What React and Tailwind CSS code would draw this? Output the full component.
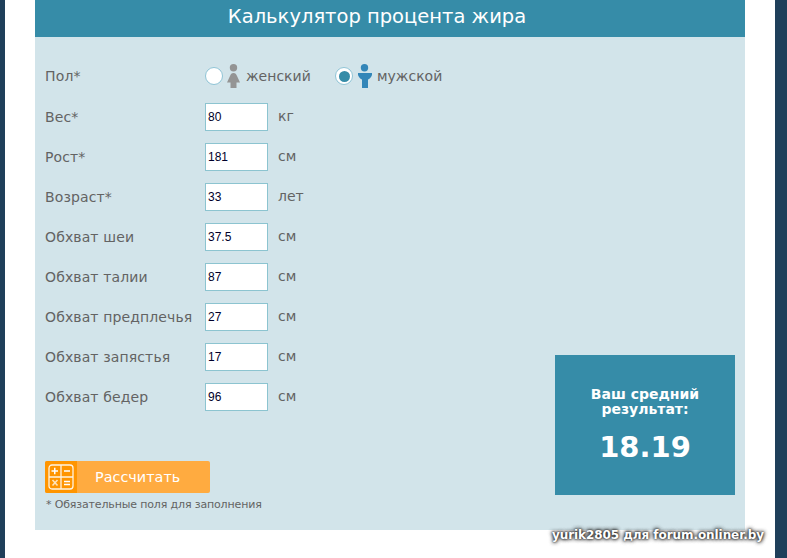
const font = { fontFamily: '"DejaVu Sans", sans-serif' };

const rows = [
  ["Вес*", "80", "кг"],
  ["Рост*", "181", "см"],
  ["Возраст*", "33", "лет"],
  ["Обхват шеи", "37.5", "см"],
  ["Обхват талии", "87", "см"],
  ["Обхват предплечья", "27", "см"],
  ["Обхват запястья", "17", "см"],
  ["Обхват бедер", "96", "см"],
];

function Female() {
  return (
    <svg width="14" height="24" viewBox="0 0 14 24" className="block shrink-0">
      <circle cx="6.5" cy="3.8" r="3.7" fill="#949494" />
      <path d="M6.5 9 C8.5 9 9.2 10 10 12 L13 18.5 L9.5 18.5 L9.5 24 L3.5 24 L3.5 18.5 L0 18.5 L3 12 C3.8 10 4.5 9 6.5 9 Z" fill="#949494" />
    </svg>
  );
}

function Male() {
  return (
    <svg width="14" height="24" viewBox="0 0 14 24" className="block shrink-0">
      <circle cx="6.5" cy="3.8" r="3.7" fill="#3386b8" />
      <path d="M0 9 L14 9 L14 11 C13 13.5 11.5 15 10 15.5 L10 24 L4 24 L4 15.5 C2.5 15 1 13.5 0 11 Z" fill="#3386b8" />
    </svg>
  );
}

function CalcIcon() {
  return (
    <svg width="26" height="26" viewBox="0 0 26 26" className="block">
      <rect x="1" y="1" width="24" height="24" rx="3" fill="none" stroke="#fff3e0" strokeWidth="1.3" />
      <path d="M13 1V25M1 13H25" stroke="#fff3e0" strokeWidth="1.3" />
      <path d="M3.5 7H10M6.75 3.8V10.2M16 7H22M16 17.5H22M16 20.5H22" stroke="#ffffff" strokeWidth="1.5" />
      <path d="M4.5 16L9.5 21.5M9.5 16L4.5 21.5" stroke="#ffe3b8" strokeWidth="1.6" />
    </svg>
  );
}

export default function App() {
  return (
    <div className="relative h-[558px] overflow-hidden bg-[#1f3f5a] pl-[5px] pr-[12px]" style={font}>
      <div className="h-full bg-white px-[30px]">
        <div className="bg-[#d2e4ea]">
          <h1 className="flex h-[37px] items-start justify-center bg-[#368ca8] pr-[26px] pt-[5px] text-[19.5px] font-normal leading-[24px] text-white">
            Калькулятор процента жира
          </h1>
          <div className="flex items-end justify-between pb-[18px] pl-[10px] pr-[10px] pt-[19px]">
            <div className="w-[400px] text-[14px] text-[#636363]">
              <div className="mb-[1px] flex h-[40px] items-center">
                <span className="w-[160px] tracking-[0.15px]">Пол*</span>
                <div className="flex items-center">
                  <span className="h-[18px] w-[18px] rounded-full border border-[#8fc4d6] bg-white" />
                  <span className="ml-[4px]"><Female /></span>
                  <span className="ml-[5px] w-[89px]">женский</span>
                  <span className="flex h-[18px] w-[18px] items-center justify-center rounded-full border border-[#8fc4d6] bg-white">
                    <span className="h-[11px] w-[11px] rounded-full bg-[#368ca8]" />
                  </span>
                  <span className="ml-[5px]"><Male /></span>
                  <span className="ml-[5px]">мужской</span>
                </div>
              </div>
              {rows.map(([label, value, unit]) => (
                <div key={label} className="flex h-[40px] items-center">
                  <span className="w-[160px] whitespace-nowrap tracking-[0.12px]">{label}</span>
                  <input
                    readOnly
                    value={value}
                    className="h-[28px] w-[63px] border border-[#8cc4d0] bg-white px-[2px] text-[12px] text-[#00002a] outline-none"
                    style={{ fontFamily: '"Liberation Sans", sans-serif' }}
                  />
                  <span className="mb-[2px] ml-[10px]">{unit}</span>
                </div>
              ))}
              <button className="mt-[44px] flex h-[32px] w-[165px] items-center overflow-hidden rounded-[2px] bg-[#ffab40] text-[14.4px] text-white">
                <span className="flex h-full w-[32px] items-center justify-center bg-[#ff9500]">
                  <CalcIcon />
                </span>
                <span className="ml-[18px] pt-[2px]">Рассчитать</span>
              </button>
              <p className="mt-[5px] pl-[1px] text-[11px] leading-[14px] tracking-[-0.15px] text-[#636363]">* Обязательные поля для заполнения</p>
            </div>
            <div className="mb-[17px] flex h-[140px] w-[180px] flex-col items-center justify-center bg-[#368ca8] font-bold text-white">
              <p className="text-center text-[14px] leading-[15px]">Ваш средний<br />результат:</p>
              <p className="mt-[13px] text-[29px] leading-[34px]">18.19</p>
            </div>
          </div>
        </div>
      </div>
      <span
        className="absolute left-[552px] top-[526px] whitespace-nowrap text-[12px] font-bold tracking-[-0.07px] text-white"
        style={{ textShadow: "0 0 4px #222, 0 0 4px #222, 0 0 2px #222" }}
      >
        yurik2805 для forum.onliner.by
      </span>
    </div>
  );
}
